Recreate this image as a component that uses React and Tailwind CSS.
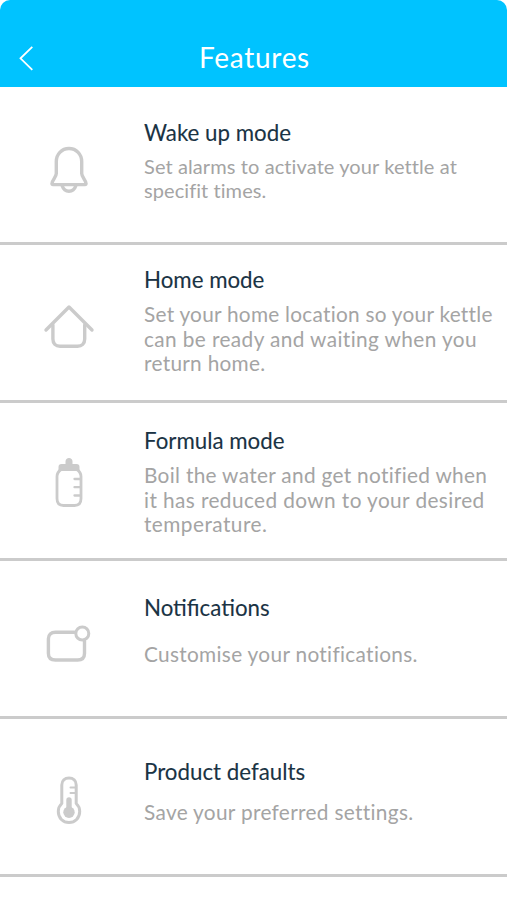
import React from "react";

const stroke = {
  fill: "none",
  stroke: "#cbcbcb",
  strokeWidth: 3.4,
  strokeLinecap: "round",
  strokeLinejoin: "round",
};

function Icon({ children }) {
  return (
    <svg className="block size-20" viewBox="0 0 80 80" {...stroke}>
      {children}
    </svg>
  );
}

const Bell = () => (
  <Icon>
    <path d="M39 18.500C31.500 18.500 26.300 24.500 26.300 31.500V43.500C26.300 46.500 22.800 49.500 22 53.200C21.800 54 22.200 54.600 23 54.600H55C55.800 54.600 56.200 54 56 53.200C55.200 49.500 51.700 46.500 51.700 43.500V31.500C51.700 24.500 46.500 18.500 39 18.500Z" />
    <path d="M32.300 56C33.500 59.800 36 61.200 39 61.200S44.500 59.800 45.700 56" />
  </Icon>
);

const House = () => (
  <Icon>
    <path d="M16 40L39 17L62 40" />
    <path d="M22.900 35V49C22.900 53.500 25.700 56.300 30 56.300H47.500C51.900 56.300 54.700 53.500 54.700 49V35" />
  </Icon>
);

const Bottle = () => (
  <Icon>
    <path
      d="M28.500 25V22C28.500 20 29.500 19 31.500 19H35.500V16.500C35.500 14.500 37 13 39 13S42.500 14.500 42.500 16.500V19H46.500C48.500 19 49.500 20 49.500 22V25Z"
      fill="#cbcbcb"
      stroke="none"
    />
    <path
      d="M31 24.500H47C50.500 27 51 28.500 51 31.500V53.500C51 58 48.500 60.500 44.500 60.500H33.500C29.500 60.500 27 58 27 53.500V31.500C27 28.500 27.500 27 31 24.500Z"
      strokeWidth="2.800"
    />
    <path d="M44.500 34H50M44.500 42.200H50M44.500 50.500H50" strokeWidth="2.300" />
  </Icon>
);

const Notice = () => (
  <Icon>
    <path d="M44.500 27.200H25.500C21 27.200 18.400 29.700 18.400 33.700V48.500C18.400 52.600 21 55 25.500 55H47.500C52 55 54.500 52.600 54.500 48.500V36" />
    <circle cx="52.300" cy="28.500" r="6.500" strokeWidth="3" />
  </Icon>
);

const Thermometer = () => (
  <Icon>
    <path
      d="M31.800 43.500V25C31.800 20.600 34.800 18 39 18S46.200 20.600 46.200 25V43.500C48.300 45.400 49.700 48.300 49.700 51.500C49.700 58 45 62.500 39 62.500S28.300 58 28.300 51.500C28.300 48.300 29.700 45.400 31.800 43.500Z"
      strokeWidth="3"
    />
    <path d="M39 40V52" strokeWidth="5.400" />
    <circle cx="39" cy="52.300" r="5.700" fill="#cbcbcb" stroke="none" />
    <path d="M40.500 27.500H45M40.500 33H45" strokeWidth="2" />
  </Icon>
);

const rows = [
  {
    icon: Bell,
    iconTop: "pt-[43px]",
    title: "Wake up mode",
    top: "pt-[32px]",
    gap: "mt-[7px]",
    size: "text-[20px] leading-[24px]",
    lines: [
      ["Set alarms to activate your kettle at", "tracking-[0.1px]"],
      ["specifit times.", "tracking-[0.07px]"],
    ],
  },
  {
    icon: House,
    iconTop: "pt-[45px]",
    title: "Home mode",
    top: "pt-[21px]",
    gap: "mt-[8px]",
    size: "text-[20.8px] leading-[24.6px]",
    lines: [
      ["Set your home location so your kettle", "tracking-[0.26px]"],
      ["can be ready and waiting when you", "tracking-[0.4px]"],
      ["return home.", "tracking-[0.29px]"],
    ],
  },
  {
    icon: Bottle,
    iconTop: "pt-[42px]",
    title: "Formula mode",
    top: "pt-[24px]",
    gap: "mt-[8px]",
    size: "text-[20.8px] leading-[24.6px]",
    lines: [
      ["Boil the water and get notified when", "tracking-[0.32px]"],
      ["it has reduced down to your desired", "tracking-[0.41px]"],
      ["temperature.", "tracking-[0.46px]"],
    ],
  },
  {
    icon: Notice,
    iconTop: "pt-[44px]",
    title: "Notifications",
    top: "pt-[33px]",
    gap: "mt-[20px]",
    size: "text-[20.8px] leading-[24.6px]",
    lines: [["Customise your notifications.", "tracking-[0.32px]"]],
  },
  {
    icon: Thermometer,
    iconTop: "pt-[41px]",
    title: "Product defaults",
    top: "pt-[39px]",
    gap: "mt-[14px]",
    size: "text-[20.8px] leading-[24.6px]",
    lines: [["Save your preferred settings.", "tracking-[0.32px]"]],
  },
];

export default function App() {
  return (
    <div className="h-[900px] w-[507px] overflow-hidden bg-white font-['Lato',sans-serif]">
      <header className="grid h-[87px] grid-cols-[60px_1fr_60px] rounded-t-[10px] bg-[#00c3ff] pt-[38px] text-white">
        <button aria-label="Back" className="flex h-10 pl-[18px] pt-[7px]">
          <svg className="h-[26px] w-4" viewBox="0 0 16 26" fill="none" stroke="currentColor" strokeWidth="1.800">
            <path d="M14.300 1.800L2.500 13.300L14.300 24.800" />
          </svg>
        </button>
        <h1 className="pl-[2px] text-center text-[28px] leading-[38px] tracking-[0.7px]">Features</h1>
      </header>
      <main>
        {rows.map(({ icon: Glyph, iconTop, title, top, gap, size, lines }) => (
          <section key={title} className="flex h-[158px] border-b-[3px] border-[#cbcbcb]">
            <div className={`w-[144px] shrink-0 pl-[30px] ${iconTop}`}>
              <Glyph />
            </div>
            <div className={`whitespace-nowrap ${top}`}>
              <h2 className="text-[22.3px] leading-[28px] text-[#1a3344] [-webkit-text-stroke:0.1px]">{title}</h2>
              <p className={`text-[#a4a4a4] ${size} ${gap}`}>
                {lines.map(([text, tracking]) => (
                  <span key={text} className="block">
                    <span className={tracking}>{text}</span>
                  </span>
                ))}
              </p>
            </div>
          </section>
        ))}
      </main>
    </div>
  );
}
